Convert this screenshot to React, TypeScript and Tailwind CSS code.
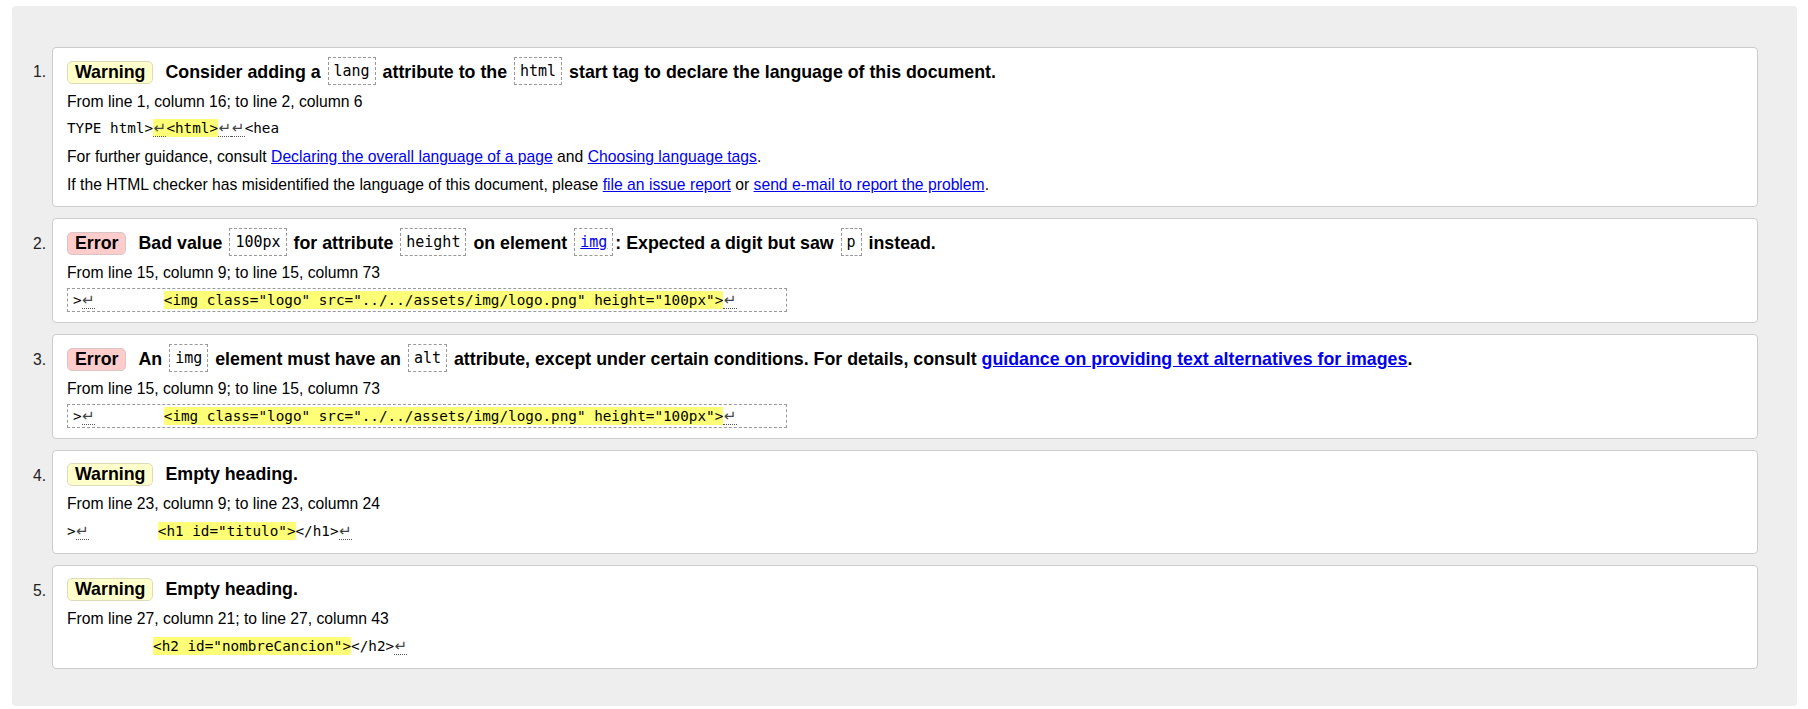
import type { ReactNode } from 'react';

type Kind = 'Warning' | 'Error';

// small pieces used by the messages
function Lf() {
  return (
    <span className="inline-block w-[13.3px] text-center leading-[16px] border-b border-dotted border-[#555] text-[#444] font-['DejaVu_Sans',sans-serif] text-[15px]">
      ↵
    </span>
  );
}

function Mark({ children }: { children: ReactNode }) {
  return <span className="bg-[#ffff77] py-px">{children}</span>;
}

function Code({ children }: { children: ReactNode }) {
  return (
    <code className="inline-block mx-[2px] px-[5px] border border-dashed border-[#999] bg-white font-['DejaVu_Sans_Mono',monospace] font-normal text-[15px] leading-[26px] align-[2px]">
      {children}
    </code>
  );
}

function A({ children, bold }: { children: ReactNode; bold?: boolean }) {
  return (
    <a href="#" className={bold ? 'text-[#0000ee] underline font-bold' : 'text-[#0000ee] underline'}>
      {children}
    </a>
  );
}

function Badge({ kind }: { kind: Kind }) {
  const bg = kind === 'Error' ? 'bg-[#ffcccc] border-[#dcc4c4]' : 'bg-[#ffffcc] border-[#dedbbb]';
  return (
    <span className={`inline-block px-[7px] border rounded-[5px] leading-[21px] ${bg}`}>{kind}</span>
  );
}

function Extract({ children, boxed }: { children: ReactNode; boxed?: boolean }) {
  return (
    <div className="h-[27.7px] flex items-center">
      <div
        className={
          boxed
            ? 'h-[24px] w-[720px] flex items-center pl-[5px] border border-dashed border-[#999]'
            : 'h-[24px] flex items-center'
        }
      >
        <span className="whitespace-pre font-['DejaVu_Sans_Mono',monospace] text-[14.3px] text-black">
          {children}
        </span>
      </div>
    </div>
  );
}

function Line({ children }: { children: ReactNode }) {
  return <div className="leading-[27.7px]">{children}</div>;
}

function Item({ n, kind, title, children }: { n: number; kind: Kind; title: ReactNode; children: ReactNode }) {
  return (
    <li className="flex">
      <div className="w-[40px] shrink-0 pr-[6px] text-right mt-[10.7px] leading-[29px] text-[#222]">{n}.</div>
      <div className="flex-1 bg-white border border-[#cccccc] rounded-[4px] pl-[14px] pr-4 pt-[9px] pb-[8px]">
        <div className="leading-[29px] font-bold text-[17.8px] text-black whitespace-nowrap">
          <Badge kind={kind} />
          <span className="ml-[12px]">{title}</span>
        </div>
        <div className="mt-px">{children}</div>
      </div>
    </li>
  );
}

export default function App() {
  return (
    <div className="min-h-screen bg-white font-['Liberation_Sans',Arial,sans-serif] text-[15.7px] text-black">
      <div className="ml-[12px] mr-[11px] mt-[6px] pt-[40.5px] pb-[36.5px] pr-[39px] rounded-[4px] bg-[#eeeeee]">
        <ol className="flex flex-col gap-[10.6px]">
          <Item
            n={1}
            kind="Warning"
            title={
              <>
                Consider adding a <Code>lang</Code> attribute to the <Code>html</Code> start tag to declare the
                language of this document.
              </>
            }
          >
            <Line>From line 1, column 16; to line 2, column 6</Line>
            <Extract>
              {'TYPE html>'}
              <Mark>
                <Lf />
                {'<html>'}
              </Mark>
              <Lf />
              <Lf />
              {'<hea'}
            </Extract>
            <Line>
              For further guidance, consult <A>Declaring the overall language of a page</A> and{' '}
              <A>Choosing language tags</A>.
            </Line>
            <Line>
              If the HTML checker has misidentified the language of this document, please <A>file an issue report</A>{' '}
              or <A>send e-mail to report the problem</A>.
            </Line>
          </Item>

          <Item
            n={2}
            kind="Error"
            title={
              <>
                Bad value <Code>100px</Code> for attribute <Code>height</Code> on element{' '}
                <Code>
                  <a href="#" className="text-[#0000ee] underline">
                    img
                  </a>
                </Code>
                : Expected a digit but saw <Code>p</Code> instead.
              </>
            }
          >
            <Line>From line 15, column 9; to line 15, column 73</Line>
            <Extract boxed>
              {'>'}
              <Lf />
              {'        '}
              <Mark>{'<img class="logo" src="../../assets/img/logo.png" height="100px">'}</Mark>
              <Lf />
            </Extract>
          </Item>

          <Item
            n={3}
            kind="Error"
            title={
              <>
                An <Code>img</Code> element must have an <Code>alt</Code> attribute, except under certain conditions.
                For details, consult <A bold>guidance on providing text alternatives for images</A>.
              </>
            }
          >
            <Line>From line 15, column 9; to line 15, column 73</Line>
            <Extract boxed>
              {'>'}
              <Lf />
              {'        '}
              <Mark>{'<img class="logo" src="../../assets/img/logo.png" height="100px">'}</Mark>
              <Lf />
            </Extract>
          </Item>

          <Item n={4} kind="Warning" title="Empty heading.">
            <Line>From line 23, column 9; to line 23, column 24</Line>
            <Extract>
              {'>'}
              <Lf />
              {'        '}
              <Mark>{'<h1 id="titulo">'}</Mark>
              {'</h1>'}
              <Lf />
            </Extract>
          </Item>

          <Item n={5} kind="Warning" title="Empty heading.">
            <Line>From line 27, column 21; to line 27, column 43</Line>
            <Extract>
              {'          '}
              <Mark>{'<h2 id="nombreCancion">'}</Mark>
              {'</h2>'}
              <Lf />
            </Extract>
          </Item>
        </ol>
      </div>
    </div>
  );
}
